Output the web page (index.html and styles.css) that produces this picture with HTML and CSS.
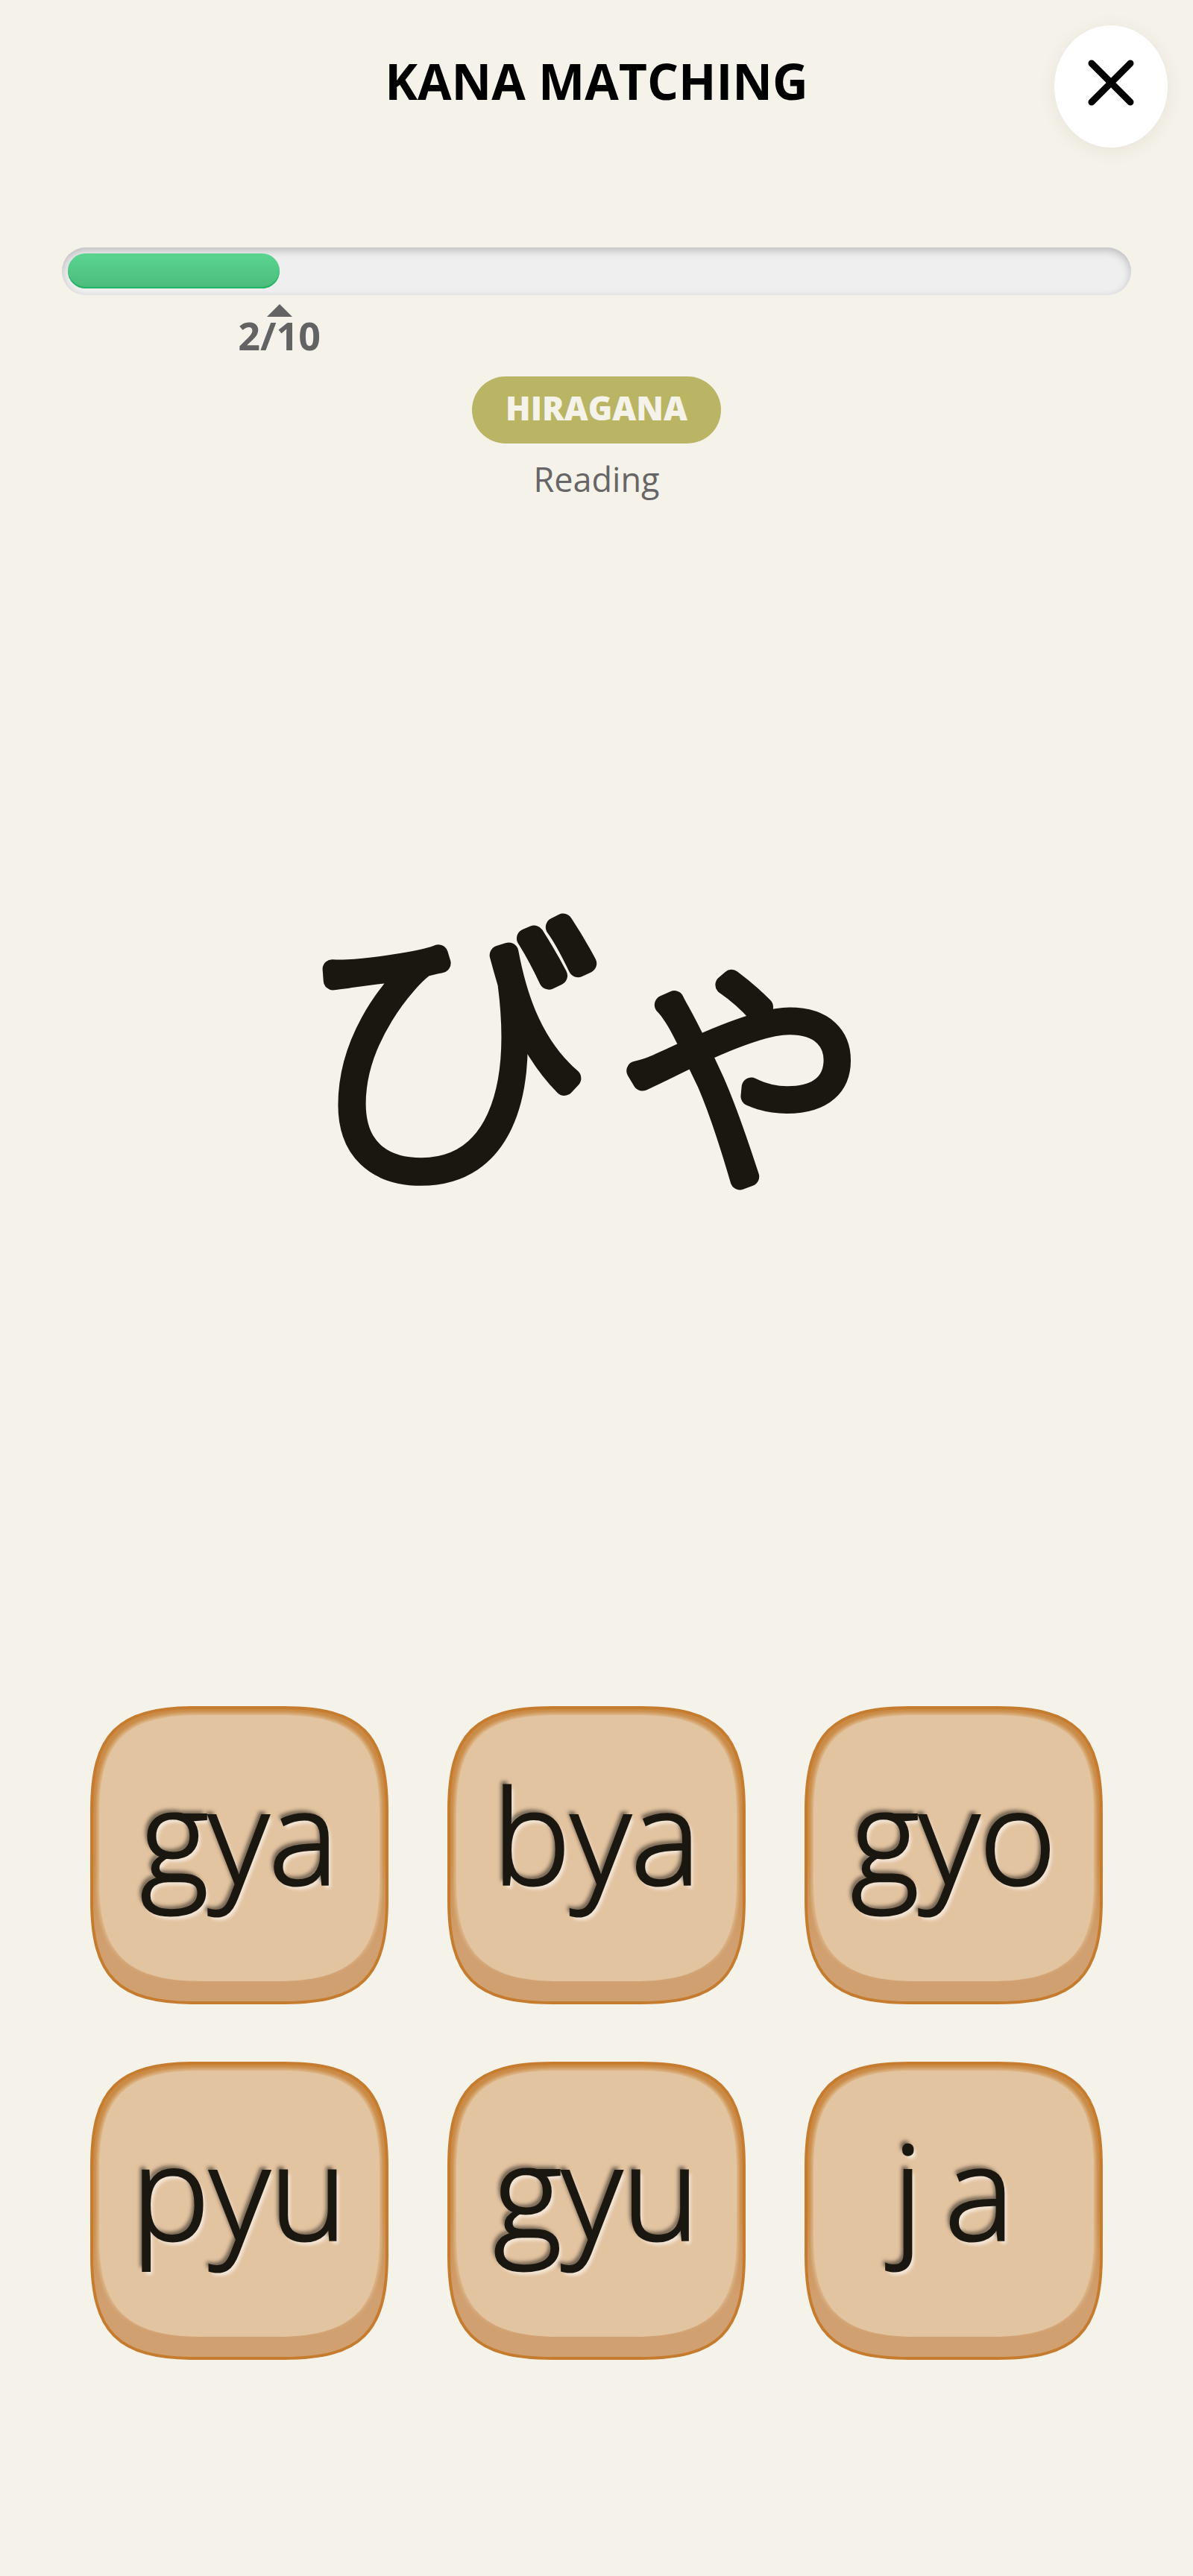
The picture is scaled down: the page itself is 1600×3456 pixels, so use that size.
FILE: index.html
```html
<!DOCTYPE html>
<html lang="en">
	<head>
		<meta charset="utf-8">
		<meta name="viewport" content="width=device-width, initial-scale=1">
		<title>Kana Matching</title>
		<link rel="stylesheet" href="styles.css">
	</head>
	<body>
		<!-- shared tile shape -->
		<svg class="defs" aria-hidden="true">
			<defs>
				<filter id="soft"><feGaussianBlur stdDeviation="2"/></filter>
				<linearGradient id="edge" x1="0" y1="0" x2="0" y2="1">
					<stop offset="0.5" stop-color="#ca8a45"/>
					<stop offset="0.8" stop-color="#d1a070"/>
				</linearGradient>
				<symbol id="tile" viewBox="0 0 400 400">
					<path d="M2 140C2 37 37 2 140 2H260C363 2 398 37 398 140V260C398 363 363 398 260 398H140C37 398 2 363 2 260Z" fill="url(#edge)" stroke="#c67c2f" stroke-width="4"/>
					<path d="M9 145C9 45 45 9 145 9H255C355 9 391 45 391 145V235C391 333 352 367 250 367H150C48 367 9 333 9 235Z" fill="#deb98d" filter="url(#soft)"/>
					<path d="M12 145C12 47 47 12 145 12H255C353 12 388 47 388 145V235C388 333 350 369 250 369H150C50 369 12 333 12 235Z" fill="#e3c4a1"/>
				</symbol>
			</defs>
		</svg>
		<header class="header">
			<h1>KANA MATCHING</h1>
			<button class="close" type="button" aria-label="Close">
				<svg viewBox="0 0 62 62"><path d="M5 5L57 57M57 5L5 57"/></svg>
			</button>
		</header>
		<main class="game">
			<div class="progress">
				<div class="track">
					<div class="bar" style="width:20%"></div>
				</div>
				<div class="scale">
					<div class="count" style="margin-left:20%"><span>2/10</span></div>
				</div>
			</div>
			<div class="info">
				<span class="badge">HIRAGANA</span>
				<p class="mode">Reading</p>
			</div>
			<div class="question">
				<svg class="kana" viewBox="0 0 800 720" lang="ja"><text x="400" y="480">びゃ</text></svg>
			</div>
			<div class="answers">
				<button type="button"><svg><use href="#tile"/></svg><span>gya</span></button>
				<button type="button"><svg><use href="#tile"/></svg><span>bya</span></button>
				<button type="button"><svg><use href="#tile"/></svg><span>gyo</span></button>
				<button type="button"><svg><use href="#tile"/></svg><span>pyu</span></button>
				<button type="button"><svg><use href="#tile"/></svg><span>gyu</span></button>
				<button type="button"><svg><use href="#tile"/></svg><span>j&#8198;a</span></button>
			</div>
		</main>
	</body>
</html>
```
FILE: styles.css
```css
* {margin:0; padding:0; box-sizing:border-box; }
body{
	min-height:100vh;
	display:flex;
	flex-direction:column;
	background:#f5f2ea;
	color:#1a1710;
	font-family:"Open Sans", "Noto Sans CJK JP", sans-serif;
}
button{
	border:0;
	font-family:inherit;
	color:inherit;
	cursor:pointer;
}
.defs{
	position:absolute;
	width:0;
	height:0;
}

.header{
	position:relative;
	height:332px;
	padding-top:64px;
	text-align:center;
}
.header h1{
	font-size:66px;
	line-height:88px;
	font-weight:700;
	color:#000;
}
.close{
	position:absolute;
	top:34px;
	right:34px;
	width:152px;
	height:164px;
	border-radius:50%;
	background:#fff;
	box-shadow:0 4px 24px rgba(80,70,30,0.08);
	display:flex;
	justify-content:center;
	padding-top:46px;
}
.close svg{
	width:62px;
	height:62px;
	fill:none;
	stroke:#000;
	stroke-width:9;
	stroke-linecap:round;
}

.game{
	flex:1;
	display:flex;
	flex-direction:column;
}
.progress{
	padding:0 83px;
}
.track{
	height:64px;
	padding:8px;
	border-radius:32px;
	background:#efefef;
	box-shadow:inset 0 4px 12px rgba(0,0,0,0.22);
}
.bar{
	height:47px;
	border-radius:24px;
	background:linear-gradient(#5ad591, #4cbb7a);
	box-shadow:inset 0 -2px 1px #1fb366;
}
.scale{
	padding:12px 8px 0;
}
.count{
	width:0;
	display:flex;
	flex-direction:column;
	align-items:center;
	font-size:52px;
	line-height:50px;
	font-weight:700;
	color:#636363;
}
.count:before{
	content:"";
	border:17px solid transparent;
	border-top:0;
	border-bottom-color:#636363;
}

.info{
	margin-top:30px;
	text-align:center;
}
.badge{
	display:inline-block;
	height:90px;
	padding:0 45px;
	border-radius:45px;
	background:#bab465;
	color:#f5f2ea;
	font-size:44px;
	line-height:84px;
	font-weight:800;
	vertical-align:top;
}
.mode{
	margin-top:18px;
	font-size:45px;
	line-height:60px;
	color:#666;
}

.question{
	flex:1;
	display:flex;
	align-items:center;
	justify-content:center;
	padding-bottom:88px;
}
.kana{
	width:50%;
	overflow:visible;
}
.kana text{
	font-family:"Noto Sans CJK JP", sans-serif;
	font-size:400px;
	font-weight:100;
	text-anchor:middle;
	fill:#1a1710;
	stroke:#1a1710;
	stroke-width:26;
	stroke-linejoin:round;
}

.answers{
	display:grid;
	grid-template-columns:repeat(3, 1fr);
	gap:77px 79px;
	padding:0 121px 290px;
}
.answers button{
	position:relative;
	aspect-ratio:1;
	background:none;
	font-size:176px;
	font-weight:300;
	line-height:240px;
	padding-bottom:58px;
}
.answers svg{
	position:absolute;
	top:0;
	left:0;
	width:100%;
	height:100%;
}
.answers span{
	position:relative;
	-webkit-text-stroke:3px #1a1710;
	text-shadow:-4px -5px 5px rgba(0,0,0,0.5), 4px 5px 4px rgba(255,255,255,0.6);
}
```
